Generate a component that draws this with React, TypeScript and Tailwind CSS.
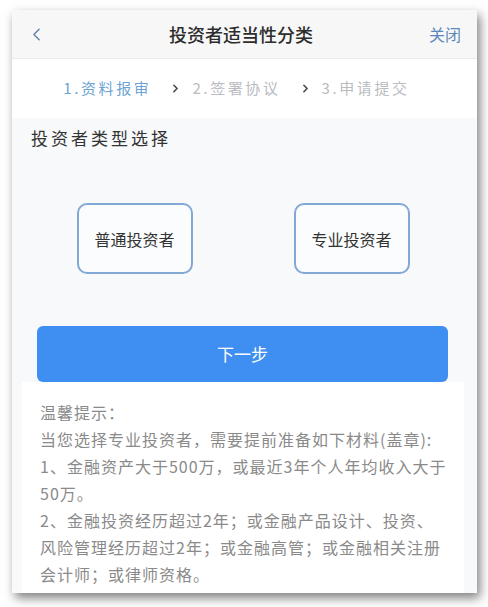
import { ChevronLeft, ChevronRight } from 'lucide-react'

const font = { fontFamily: '"Noto Sans CJK SC", "Noto Sans", sans-serif' }

const steps = [
  { label: '1.资料报审', active: true },
  { label: '2.签署协议', active: false },
  { label: '3.申请提交', active: false },
]

const tips = [
  '温馨提示：',
  '当您选择专业投资者，需要提前准备如下材料(盖章):',
  '1、金融资产大于500万，或最近3年个人年均收入大于',
  '50万。',
  '2、金融投资经历超过2年；或金融产品设计、投资、',
  '风险管理经历超过2年；或金融高管；或金融相关注册',
  '会计师；或律师资格。',
]

function InvestorOption({ label }: { label: string }) {
  return (
    <button
      type="button"
      className="flex h-[71px] w-[116px] items-center justify-center rounded-[10px] border-2 border-[#82a8d6] bg-[#fbfcfd] text-[16px] text-[#333]"
    >
      {label}
    </button>
  )
}

export default function App() {
  return (
    <div className="min-h-screen bg-white pl-[12px] pt-[10px]" style={font}>
      <div className="flex h-[583px] w-[465px] flex-col overflow-hidden bg-[#f8f9fa] shadow-[3px_5px_10px_rgba(0,0,0,0.5)]">
        <div className="flex h-[49px] shrink-0 items-center justify-between border-b border-[#e9ebee] bg-[#f7f7f8] pl-[14px] pr-[16px]">
          <ChevronLeft className="h-[21px] w-[21px] text-[#5d7fa6]" strokeWidth={1.6} />
          <h1 className="pl-[6px] text-[18px] font-medium text-[#2d2d2d]">投资者适当性分类</h1>
          <span className="text-[16px] text-[#5b88ba]">关闭</span>
        </div>

        <div className="flex h-[59px] shrink-0 items-center justify-center bg-white pr-[16px] text-[15px] tracking-[2.6px]">
          {steps.map((step, i) => (
            <div key={step.label} className="flex items-center">
              {i > 0 && <ChevronRight className="ml-[18px] mr-[10px] h-[13px] w-[13px] text-[#4a4a4a]" strokeWidth={3} />}
              <span className={step.active ? 'text-[#6ba3d3]' : 'text-[#b9bcc1]'}>{step.label}</span>
            </div>
          ))}
        </div>

        <div className="flex flex-1 flex-col">
          <h2 className="pl-[19px] pt-[8px] text-[17px] leading-[24px] tracking-[3px] text-[#333]">投资者类型选择</h2>

          <div className="mt-[53px] flex justify-center gap-[101px] pr-[3px]">
            <InvestorOption label="普通投资者" />
            <InvestorOption label="专业投资者" />
          </div>

          <button
            type="button"
            className="ml-[25px] mt-[52px] h-[56px] w-[411px] rounded-[6px] bg-[#3f8ef2] text-[17px] text-white"
          >
            下一步
          </button>

          <div className="ml-[10px] w-[442px] flex-1 bg-white pl-[18px] pt-[17px] text-[16px] leading-[27px] tracking-[1px] text-[#8a8a8a]">
            {tips.map(line => (
              <p key={line} className="whitespace-nowrap">{line}</p>
            ))}
          </div>
        </div>
      </div>
    </div>
  )
}
